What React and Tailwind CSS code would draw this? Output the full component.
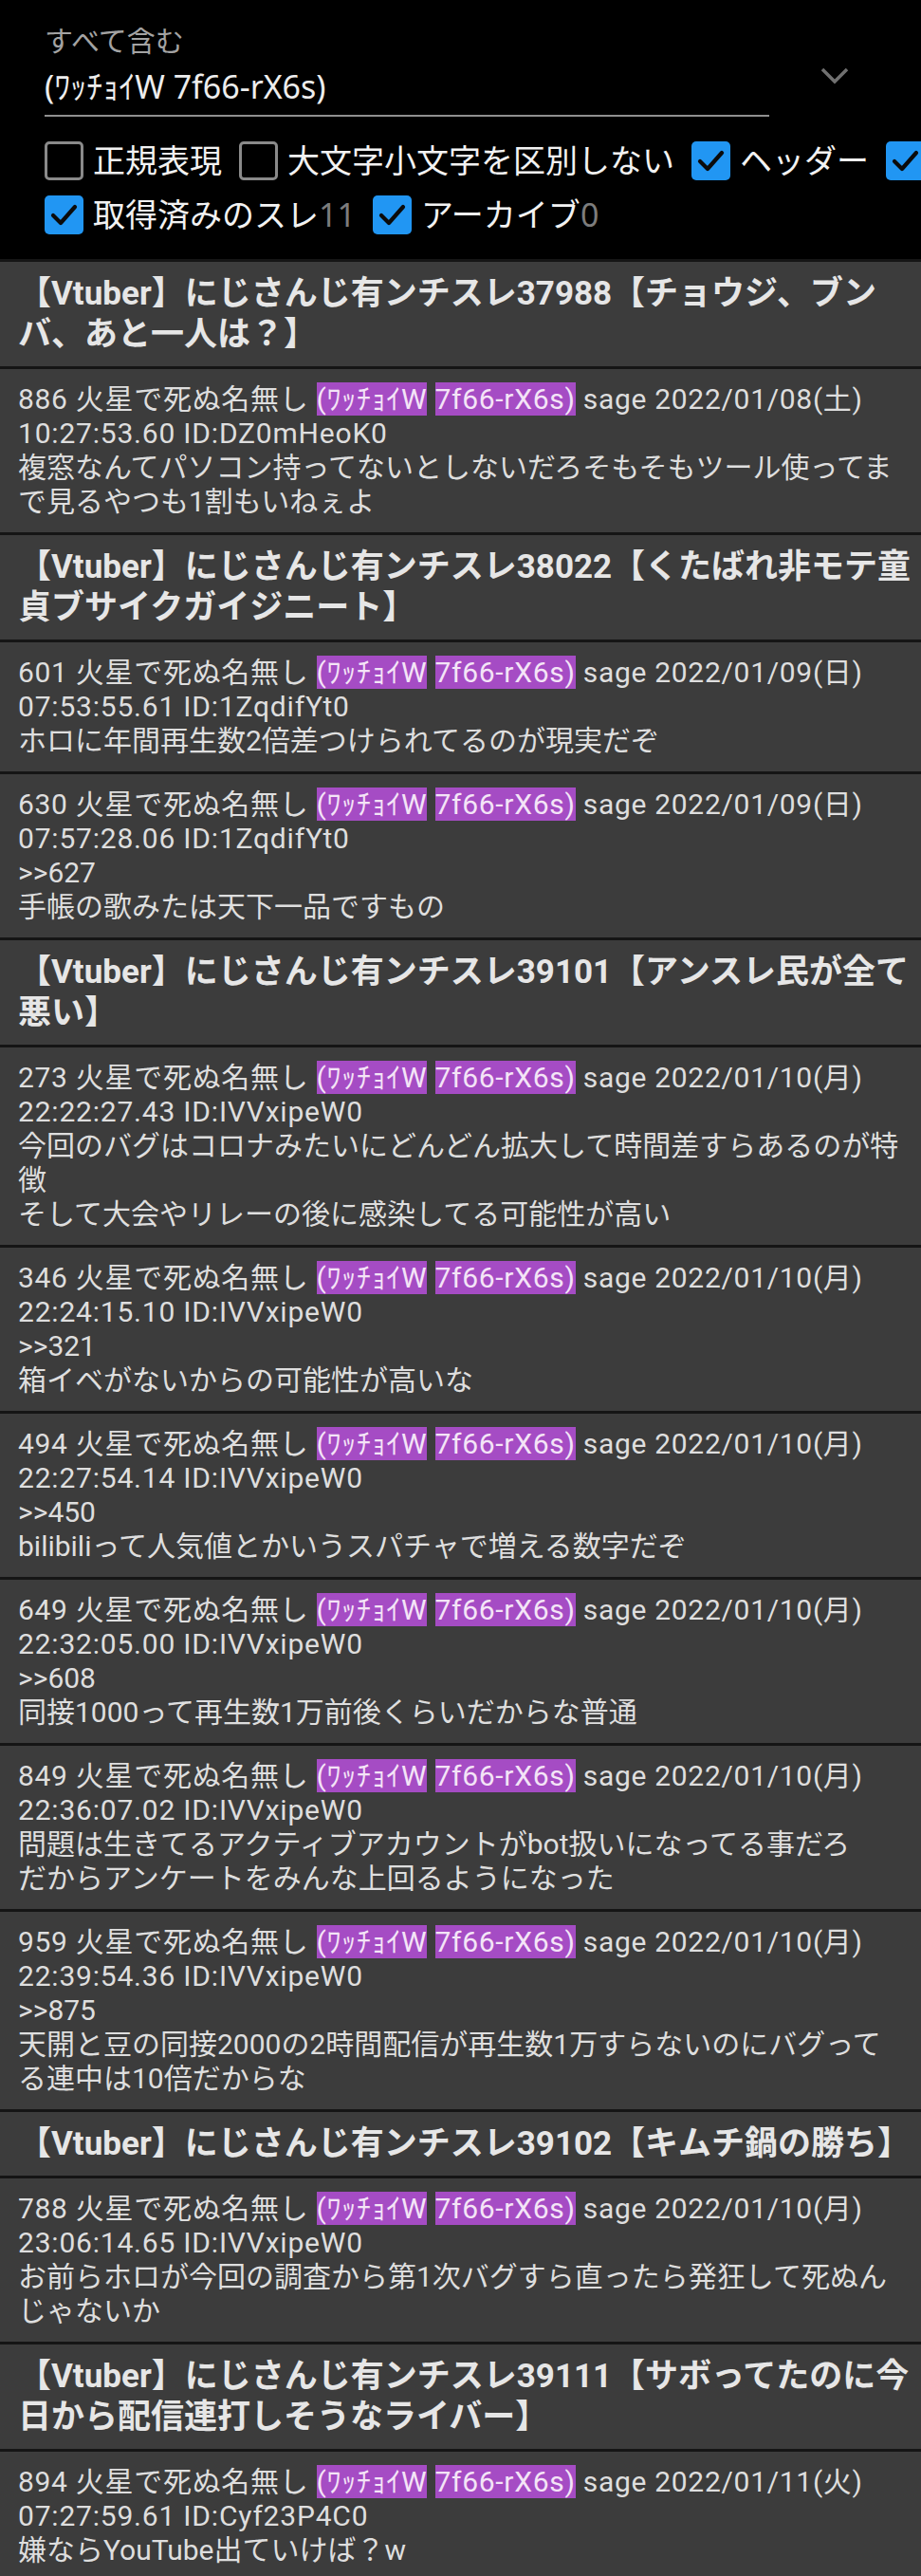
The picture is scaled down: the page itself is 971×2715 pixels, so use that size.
import React from "react";

// 検索結果ビュー: 上部フィルタ + スレ/レスのリスト

const FONT = { fontFamily: 'Roboto, "Noto Sans CJK JP", sans-serif' };
const HEAD_FONT = { fontFamily: '"Noto Sans", "Noto Sans CJK JP", sans-serif' };

const ROWS = [
  { type: "title", lines: ["【Vtuber】にじさんじ有ンチスレ37988【チョウジ、ブン", "バ、あと一人は？】"] },
  { type: "post", no: 886, date: "2022/01/08(土)", time: "10:27:53.60 ID:DZ0mHeoK0", body: ["複窓なんてパソコン持ってないとしないだろそもそもツール使ってま", "で見るやつも1割もいねぇよ"] },
  { type: "title", lines: ["【Vtuber】にじさんじ有ンチスレ38022【くたばれ非モテ童", "貞ブサイクガイジニート】"] },
  { type: "post", no: 601, date: "2022/01/09(日)", time: "07:53:55.61 ID:1ZqdifYt0", body: ["ホロに年間再生数2倍差つけられてるのが現実だぞ"] },
  { type: "post", no: 630, date: "2022/01/09(日)", time: "07:57:28.06 ID:1ZqdifYt0", body: [">>627", "手帳の歌みたは天下一品ですもの"] },
  { type: "title", lines: ["【Vtuber】にじさんじ有ンチスレ39101【アンスレ民が全て", "悪い】"] },
  { type: "post", no: 273, date: "2022/01/10(月)", time: "22:22:27.43 ID:IVVxipeW0", body: ["今回のバグはコロナみたいにどんどん拡大して時間差すらあるのが特", "徴", "そして大会やリレーの後に感染してる可能性が高い"] },
  { type: "post", no: 346, date: "2022/01/10(月)", time: "22:24:15.10 ID:IVVxipeW0", body: [">>321", "箱イベがないからの可能性が高いな"] },
  { type: "post", no: 494, date: "2022/01/10(月)", time: "22:27:54.14 ID:IVVxipeW0", body: [">>450", "bilibiliって人気値とかいうスパチャで増える数字だぞ"] },
  { type: "post", no: 649, date: "2022/01/10(月)", time: "22:32:05.00 ID:IVVxipeW0", body: [">>608", "同接1000って再生数1万前後くらいだからな普通"] },
  { type: "post", no: 849, date: "2022/01/10(月)", time: "22:36:07.02 ID:IVVxipeW0", body: ["問題は生きてるアクティブアカウントがbot扱いになってる事だろ", "だからアンケートをみんな上回るようになった"] },
  { type: "post", no: 959, date: "2022/01/10(月)", time: "22:39:54.36 ID:IVVxipeW0", body: [">>875", "天開と豆の同接2000の2時間配信が再生数1万すらないのにバグって", "る連中は10倍だからな"] },
  { type: "title", lines: ["【Vtuber】にじさんじ有ンチスレ39102【キムチ鍋の勝ち】"] },
  { type: "post", no: 788, date: "2022/01/10(月)", time: "23:06:14.65 ID:IVVxipeW0", body: ["お前らホロが今回の調査から第1次バグすら直ったら発狂して死ぬん", "じゃないか"] },
  { type: "title", lines: ["【Vtuber】にじさんじ有ンチスレ39111【サボってたのに今", "日から配信連打しそうなライバー】"] },
  { type: "post", no: 894, date: "2022/01/11(火)", time: "07:27:59.61 ID:Cyf23P4C0", body: ["嫌ならYouTube出ていけば？w"] },
];

function Box({ checked }) {
  if (!checked) {
    return <span className="h-[41px] w-[41px] shrink-0 rounded-[5px] border-[3px] border-[#8a8a8a]" />;
  }
  return (
    <span className="flex h-[41px] w-[41px] shrink-0 items-center justify-center rounded-[5px] bg-[#2196f3]">
      <svg width="41" height="41" viewBox="0 0 41 41">
        <path d="M9 21 L17 29 L32 12" fill="none" stroke="#0b0b0b" strokeWidth="4.2" strokeLinecap="round" strokeLinejoin="round" />
      </svg>
    </span>
  );
}

function Check({ checked, label, count }) {
  return (
    <span className="flex shrink-0 items-center gap-[10px] whitespace-nowrap">
      <Box checked={checked} />
      {label && (
        <span className="text-[34px] text-[#f2f2f2]">
          {label}
          {count !== undefined && <span className="text-[#7c7c7c]">{count}</span>}
        </span>
      )}
    </span>
  );
}

function Header() {
  return (
    <div className="overflow-hidden bg-black pb-[18px] pl-[47px]" style={HEAD_FONT}>
      <div className="flex items-start">
        <div className="w-[764px]">
          <div className="pt-[24px] text-[30px] leading-[38px] text-[#a3a3a3]">すべて含む</div>
          <div className="mt-[9px] text-[34px] leading-[40px] text-[#ededed]">(ﾜｯﾁｮｲW 7f66-rX6s)</div>
          <div className="mt-[10px] h-[2px] bg-[#8f8f8f]" />
        </div>
        <svg className="ml-[54px] mt-[70px]" width="30" height="20" viewBox="0 0 30 20">
          <path d="M2 3 L15 16 L28 3" fill="none" stroke="#707070" strokeWidth="3.5" />
        </svg>
      </div>
      <div className="mt-[18px] flex h-[57px] items-center gap-[18px]">
        <Check label="正規表現" />
        <Check label="大文字小文字を区別しない" />
        <Check checked label="ヘッダー" />
        <Check checked />
      </div>
      <div className="flex h-[57px] items-center gap-[18px]">
        <Check checked label="取得済みのスレ" count="11" />
        <Check checked label="アーカイブ" count="0" />
      </div>
    </div>
  );
}

function Hit({ children }) {
  return <span className="bg-[#a54cc4] text-[#f4e4f7]">{children}</span>;
}

function Title({ lines }) {
  return (
    <div className="bg-[#3c3c3c] px-[19px] py-[12px] text-[35px] font-bold leading-[43px] text-[#e6e6e6]">
      {lines.map((l) => (
        <div key={l} className="whitespace-nowrap">{l}</div>
      ))}
    </div>
  );
}

function Post({ no, date, time, body }) {
  return (
    <div className="bg-[#3c3c3c] px-[19px] py-[14px] text-[30px] leading-[36px] text-[#dedede]">
      <div className="whitespace-nowrap tracking-[0.7px]">
        {no} 火星で死ぬ名無し <Hit>(ﾜｯﾁｮｲW</Hit> <Hit>7f66-rX6s)</Hit> sage {date}
      </div>
      <div className="whitespace-nowrap tracking-[0.8px]">{time}</div>
      {body.map((l, i) => (
        <div key={i} className="whitespace-nowrap">{l}</div>
      ))}
    </div>
  );
}

export default function App() {
  return (
    <div className="min-h-screen w-[971px] overflow-hidden bg-[#151515]" style={FONT}>
      <Header />
      <div className="flex flex-col gap-[3px] pt-[3px]">
        {ROWS.map((r, i) =>
          r.type === "title" ? <Title key={i} lines={r.lines} /> : <Post key={i} {...r} />
        )}
      </div>
    </div>
  );
}
